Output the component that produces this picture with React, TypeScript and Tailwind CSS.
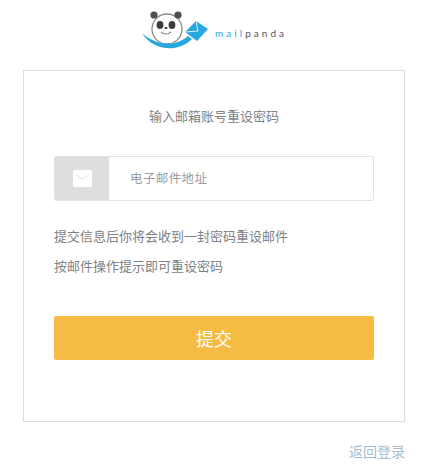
const font = { fontFamily: '"Noto Sans CJK SC", sans-serif' };

const Logo = () => (
  <div className="flex items-center h-[52px] pl-[142px]">
    <svg width="68" height="52" viewBox="0 0 68 52">
      {/* head */}
      <circle cx="25" cy="29" r="15" fill="#fff" stroke="#8a8a8a" strokeWidth="1.3" />
      {/* swoosh */}
      <path d="M0 33 C9 42 30 50 46 36 L50 39 C35 54 10 50 0 33 Z" fill="#29a8e0" />
      {/* ears */}
      <circle cx="12" cy="15" r="3.6" fill="#4f4f4f" />
      <circle cx="36" cy="15" r="3.6" fill="#4f4f4f" />
      {/* face */}
      <ellipse cx="18" cy="25" rx="3.4" ry="3.9" fill="#3c3c3c" />
      <ellipse cx="30" cy="25" rx="3.4" ry="3.9" fill="#3c3c3c" />
      <ellipse cx="24" cy="28" rx="1.7" ry="1.1" fill="#444" />
      <path d="M19 32 Q24 36 29 32" fill="none" stroke="#888" strokeWidth="1.1" />
      {/* envelope plane */}
      <path d="M54 21 L66 29 L55 41 L43 32 Z" fill="#29a8e0" />
      <path d="M54 21 L56 31 L43 32" fill="none" stroke="#d8f0fb" strokeWidth="1" />
    </svg>
    <div className="ml-[5px] mt-[14px] text-[10px] leading-[14px] tracking-[3.05px] font-['Lato',sans-serif]">
      <span className="text-[#29a8e0]">mail</span>
      <span className="text-[#555555]">panda</span>
    </div>
  </div>
);

export default function App() {
  return (
    <div className="w-[437px] h-[476px] bg-white overflow-hidden" style={font}>
      <Logo />
      <div className="mt-[18px] ml-[23px] w-[382px] h-[352px] border border-[#dcdee0] bg-white px-[30px] pt-[35px]">
        <p className="text-center text-[13px] leading-[20px] text-[#7d8287]">输入邮箱账号重设密码</p>
        <div className="mt-[30px] flex h-[45px] w-[320px] rounded-[2px] border border-[#e1e3e5] overflow-hidden">
          <div className="flex w-[54px] items-center justify-center bg-[#dcdee0]">
            <svg width="19" height="17" viewBox="0 0 19 17">
              <rect width="19" height="17" rx="1.5" fill="#fff" />
              <path d="M3 4.5 L9.5 9 L16 4.5" fill="none" stroke="#e3e4e6" strokeWidth="1" />
            </svg>
          </div>
          <div className="flex flex-1 items-center pl-[21px] text-[12.5px] tracking-[0.4px] text-[#9a9da1]">电子邮件地址</div>
        </div>
        <p className="mt-[25px] text-[13px] leading-[20px] text-[#7d8287]">提交信息后你将会收到一封密码重设邮件</p>
        <p className="mt-[10px] text-[13px] leading-[20px] text-[#7d8287]">按邮件操作提示即可重设密码</p>
        <button className="mt-[40px] h-[44px] w-[320px] rounded-[2px] bg-[#f5bb43] text-[18px] text-white">提交</button>
      </div>
      <div className="mt-[19px] mr-[32px] text-right text-[14px] leading-[20px] text-[#a4bccb]">返回登录</div>
    </div>
  );
}
